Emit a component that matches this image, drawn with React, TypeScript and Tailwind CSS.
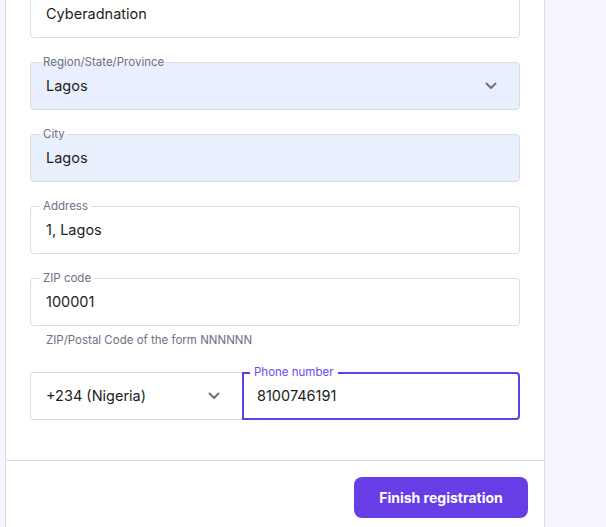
import React from "react";

function Chevron() {
  return (
    <svg width="12" height="8" viewBox="0 0 12 8" fill="none" className="shrink-0">
      <path d="M1.5 1.5L6 6L10.5 1.5" stroke="#6d7081" strokeWidth="2" strokeLinecap="round" strokeLinejoin="round" />
    </svg>
  );
}

function Field({
  label,
  value,
  filled = false,
  select = false,
  className = "",
}: {
  label?: string;
  value: string;
  filled?: boolean;
  select?: boolean;
  className?: string;
}) {
  return (
    <div
      className={`relative flex h-12 items-center justify-between rounded border border-[#dadce0] pl-[15px] pr-[22px] ${
        filled ? "bg-[#e8f0fe]" : "bg-white"
      } ${className}`}
    >
      {label == null ? null : (
        <span
          className={`absolute -top-[9px] left-[9px] px-[3px] text-[11.5px] leading-4 text-[#6d7081] ${
            filled ? "bg-[linear-gradient(to_bottom,white_50%,#e8f0fe_50%)]" : "bg-white"
          }`}
        >
          {label}
        </span>
      )}
      <span className="text-[14.5px] text-[#1d1e20]">{value}</span>
      {select ? <Chevron /> : null}
    </div>
  );
}

export default function App() {
  return (
    <div
      className="flex h-[527px] w-[606px] overflow-hidden bg-[#f4f5ff]"
      style={{ fontFamily: "Inter, 'Noto Sans', sans-serif" }}
    >
      <div className="w-[5px] shrink-0" />
      <div className="flex w-[540px] shrink-0 flex-col border-x border-[#dadce0] bg-white">
        <div className="flex flex-col px-6 pb-10">
          <Field value="Cyberadnation" className="-mt-[10px]" />
          <Field label="Region/State/Province" value="Lagos" filled select className="mt-6" />
          <Field label="City" value="Lagos" filled className="mt-6" />
          <Field label="Address" value="1, Lagos" className="mt-6" />
          <Field label="ZIP code" value="100001" className="mt-6" />
          <div className="mt-[6px] pl-4 text-[11.5px] leading-4 text-[#6d7081]">
            ZIP/Postal Code of the form NNNNNN
          </div>
          <div className="mt-6 flex h-12">
            <div className="flex w-[212px] items-center justify-between rounded-l border border-r-0 border-[#dadce0] pl-[15px] pr-[22px]">
              <span className="text-[14.5px] text-[#1d1e20]">+234 (Nigeria)</span>
              <Chevron />
            </div>
            <div className="relative flex flex-1 items-center rounded-r border-2 border-[#673de6] pl-[13px]">
              <span className="absolute -top-[10px] left-[6px] bg-white px-[4px] text-[11.5px] leading-4 text-[#7047ea]">
                Phone number
              </span>
              <span className="text-[14.5px] text-[#1d1e20]">8100746191</span>
            </div>
          </div>
        </div>
        <div className="flex justify-end border-t border-[#dadce0] px-4 pt-4">
          <button className="h-[41px] w-[174px] rounded-lg bg-[#673de6] text-sm font-bold text-white">
            Finish registration
          </button>
        </div>
      </div>
    </div>
  );
}
